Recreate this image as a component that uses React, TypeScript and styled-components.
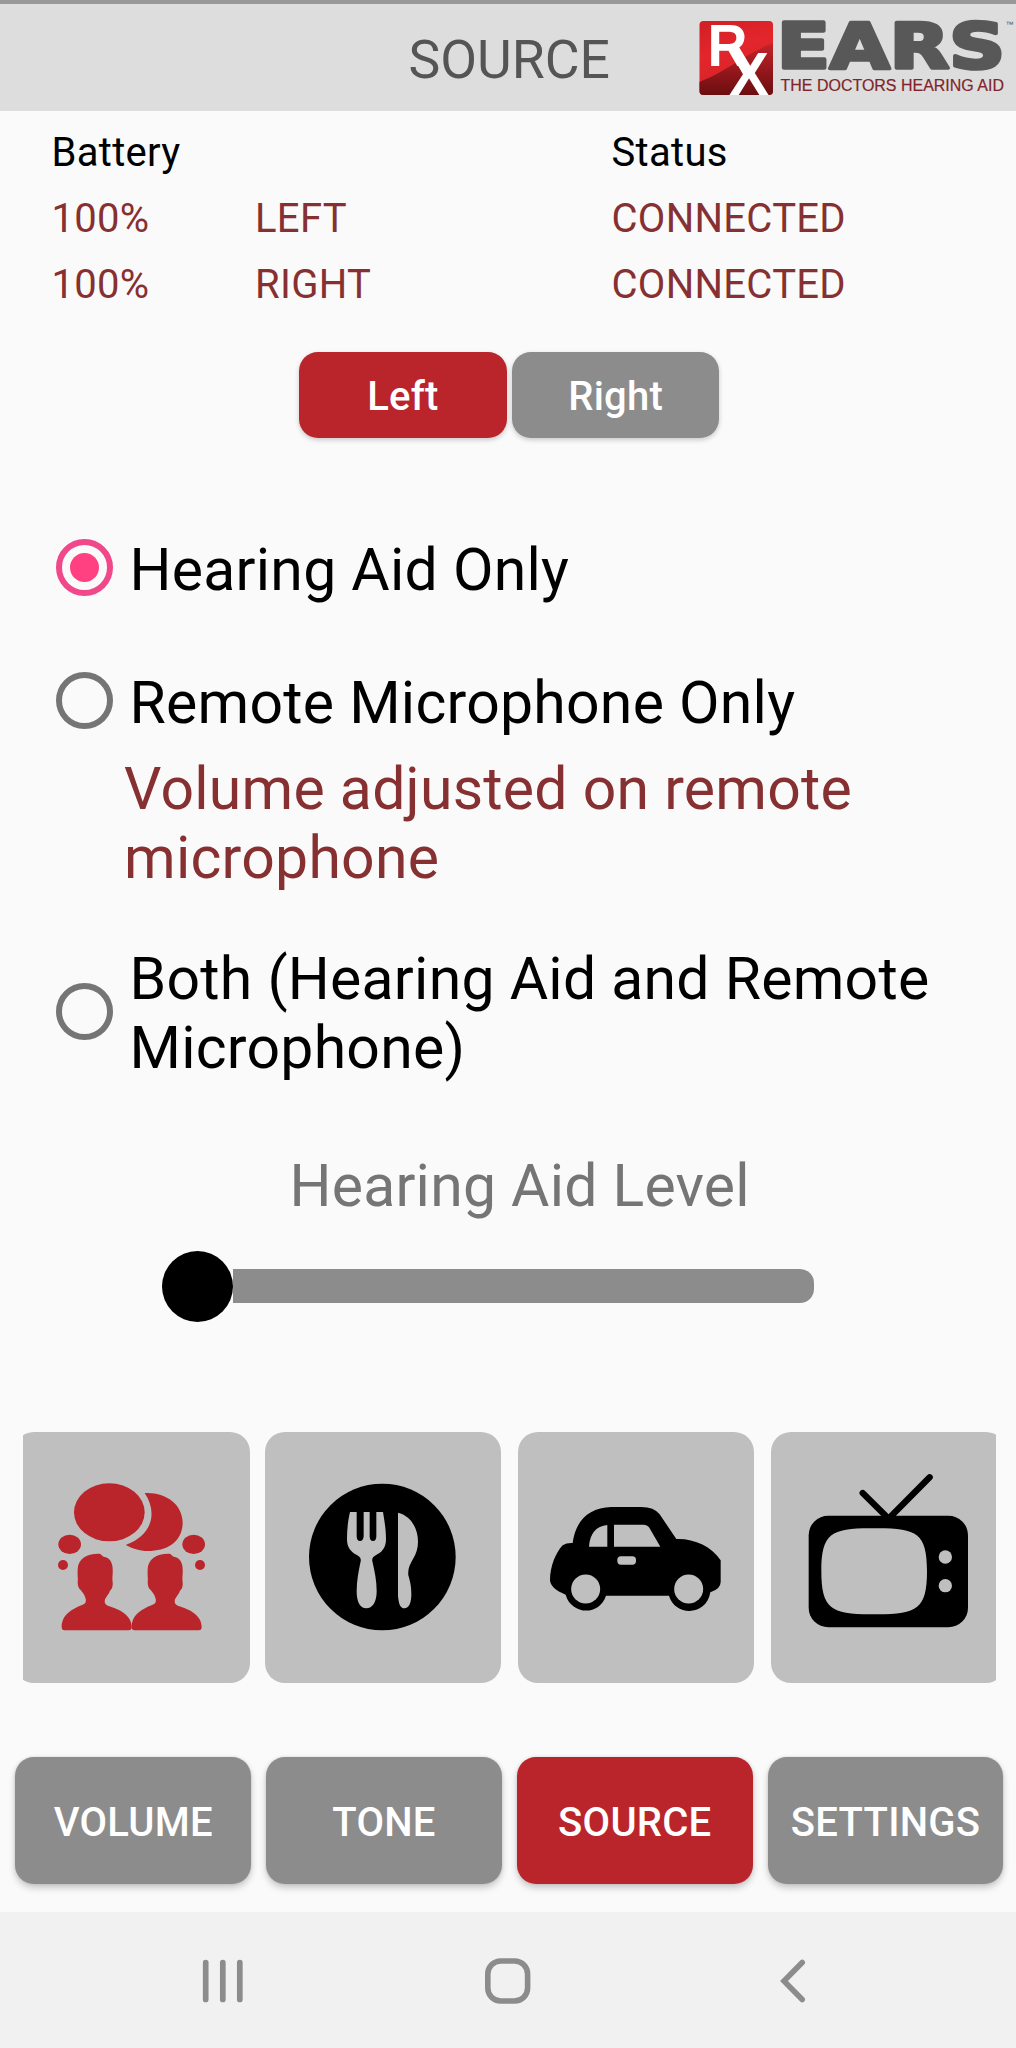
import React, { useState } from "react";
import styled, { createGlobalStyle, css } from "styled-components";

const RED = "#ba252b";
const GREY = "#8c8c8c";
const MAROON = "#863031";

const GlobalStyle = createGlobalStyle`
  * { box-sizing: border-box; }
  body { margin: 0; background: #fafafa; }
`;

const Screen = styled.div`
  width: 1016px;
  height: 2048px;
  display: flex;
  flex-direction: column;
  overflow: hidden;
  background: #fafafa;
  color: #000;
  font-family: Roboto, "Liberation Sans", sans-serif;
`;

const Header = styled.header`
  height: 111px;
  flex: none;
  display: flex;
  justify-content: space-between;
  background: #ddd;
  border-top: 4px solid #989898;
`;

const Title = styled.h1`
  margin: 0 0 0 408.5px;
  font-size: 53.5px;
  font-weight: 400;
  line-height: 63px;
  padding-top: 24px;
  color: #555;
`;

const LogoSvg = styled.svg`
  display: block;
  width: 336px;
  height: 107px;
`;

const StatusGrid = styled.section`
  display: grid;
  grid-template-columns: 203.5px 356.5px 1fr;
  grid-auto-rows: 66px;
  align-items: center;
  padding: 8px 0 0 51.5px;
  height: 240px;
  flex: none;
  font-size: 40px;
  line-height: 47px;
  letter-spacing: 0.3px;
`;

const Cell = styled.span<{ $start?: number; $value?: boolean }>`
  ${(p) => p.$start && css`grid-column: ${p.$start};`}
  color: ${(p) => (p.$value ? MAROON : "#000")};
`;

const Button = styled.button<{ $active: boolean }>`
  border: 0;
  padding: 0;
  border-radius: 19px;
  background: ${(p) => (p.$active ? RED : GREY)};
  color: #fff;
  font: 500 40px/47px Roboto, "Liberation Sans", sans-serif;
  letter-spacing: 0.25px;
  box-shadow: 0 4px 7px rgba(0, 0, 0, 0.2), 0 0 3px rgba(0, 0, 0, 0.12);
`;

const SideToggle = styled.div`
  display: flex;
  justify-content: center;
  gap: 5px;
  height: 87px;
  flex: none;
  padding-left: 2.6px;
`;

const SideButton = styled(Button)`
  width: 207.7px;
  height: 86px;
  margin-top: 0.5px;
  padding-top: 3px;
  box-shadow: 0 2px 5px rgba(0, 0, 0, 0.2);
`;

const Options = styled.section`
  display: flex;
  flex-direction: column;
  height: 706px;
  flex: none;
  padding: 93.5px 0 0 56px;
  font-size: 58.9px;
  letter-spacing: 0.26px;
  line-height: 69px;
`;

const Option = styled.label<{ $gap?: number }>`
  display: flex;
  align-items: center;
  gap: 16.5px;
  margin-top: ${(p) => p.$gap ?? 0}px;
`;

const Radio = styled.span<{ $on: boolean }>`
  width: 57px;
  height: 57px;
  flex: none;
  border: 6px solid ${(p) => (p.$on ? "#f0488a" : "#757575")};
  border-radius: 50%;
  display: grid;
  place-items: center;
  &::after {
    content: "";
    width: 29px;
    height: 29px;
    border-radius: 50%;
    background: ${(p) => (p.$on ? "#ff4081" : "transparent")};
  }
`;

const OptionText = styled.span`
  width: 850px;
  padding-top: 3px;
`;

const Note = styled.p`
  margin: 17px 0 0 68px;
  width: 780px;
  color: ${MAROON};
`;

const Level = styled.section`
  height: 288px;
  flex: none;
  display: flex;
  flex-direction: column;
`;

const LevelTitle = styled.div`
  margin: 7px 0 0 289.5px;
  font-size: 58.9px;
  letter-spacing: 0.22px;
  line-height: 69px;
  color: #757575;
`;

const Slider = styled.div`
  display: flex;
  align-items: center;
  margin: 31px 0 0 162px;
`;

const Thumb = styled.div`
  width: 71px;
  height: 71px;
  border-radius: 50%;
  background: #000;
`;

const Track = styled.div`
  width: 581px;
  height: 34px;
  margin-top: -1px;
  border-radius: 0 14px 14px 0;
  background: ${GREY};
`;

const Modes = styled.section`
  display: flex;
  gap: 17px;
  flex: none;
  width: 973px;
  height: 251px;
  margin-left: 23px;
  overflow: hidden;
`;

const ModeCard = styled.div<{ $first?: boolean }>`
  width: ${(p) => (p.$first ? 236 : 235.7)}px;
  height: 251px;
  flex: none;
  border-radius: 20px;
  background: #bfbfbf;
  margin-left: ${(p) => (p.$first ? "-9px" : 0)};
  margin-right: ${(p) => (p.$first ? "-1.7px" : 0)};
  svg { display: block; width: 236px; height: 251px; }
`;

const Tabs = styled.nav`
  display: flex;
  gap: 15px;
  flex: none;
  height: 229px;
  padding: 73.5px 0 0 15.3px;
`;

const Tab = styled(Button)`
  width: 235.8px;
  height: 127.5px;
  padding-top: 4px;
`;

const SystemBar = styled.footer`
  flex: 1;
  display: flex;
  align-items: center;
  background: #f1f1f1;
  padding: 2px 0 0 199px;
  gap: 234px;
  svg { width: 50px; height: 50px; flex: none; }
`;

const Logo = () => (
  <LogoSvg viewBox="680 4 336 107">
    <defs>
      <linearGradient id="tile" x1="0" y1="0" x2="0.3" y2="1">
        <stop offset="0" stopColor="#cf1f25" />
        <stop offset="0.45" stopColor="#e3262b" />
        <stop offset="1" stopColor="#d3232a" />
      </linearGradient>
      <linearGradient id="shade" x1="0" y1="0" x2="0" y2="1">
        <stop offset="0" stopColor="#c4232a" />
        <stop offset="1" stopColor="#690d10" />
      </linearGradient>
      <clipPath id="tileClip"><rect x="699.5" y="21" width="73.5" height="74" rx="4" /></clipPath>
    </defs>
    <g clipPath="url(#tileClip)">
      <rect x="699" y="20" width="75" height="76" fill="url(#tile)" />
      <path d="M699 82C728 71 747 52 774 43V96H699Z" fill="url(#shade)" />
      <g fill="#fff" fontFamily="Liberation Sans, sans-serif" fontWeight="700">
        <text x="707.5" y="66" fontSize="59" textLength="40" lengthAdjust="spacingAndGlyphs">R</text>
        <text x="729" y="95" fontSize="61" textLength="40" lengthAdjust="spacingAndGlyphs">X</text>
      </g>
      <path d="M729 50L739 47L754 72L744 76Z" fill="#fff" />
    </g>
    <text
      x="777" y="68.3" textLength="228" lengthAdjust="spacingAndGlyphs"
      fill="#585858" stroke="#585858" strokeWidth="3.6" strokeLinejoin="round"
      fontFamily="DejaVu Sans, sans-serif" fontWeight="700" fontSize="61.5"
    >EARS</text>
    <text x="1005.5" y="27" fontSize="8" fill="#555" fontFamily="Liberation Sans, sans-serif">™</text>
    <text x="780.5" y="90.7" fontSize="16.8" textLength="223.5" lengthAdjust="spacingAndGlyphs" fill="#80242a" stroke="#80242a" strokeWidth="0.2" fontFamily="Liberation Sans, sans-serif">THE DOCTORS HEARING AID</text>
  </LogoSvg>
);

/* Icon artwork is laid out on a 3x grid of the 236 x 251 card. */
const Bust = ({ x }: { x: number }) => (
  <path
    transform={`translate(${x} 0)`}
    d="M185 622C185 584 216 567 246 555C256 551 259 547 257 536C253 522 246 515 242 510C235 505 233 495 233 486C235 478 232 470 233 448C234 417 260 400 298 401C305 402 306 408 311 410C329 412 338 428 338 448C339 465 336 473 338 486C339 500 336 507 330 512C327 522 318 530 315 538C313 548 314 554 326 558C360 569 395 585 395 622Q395 631 386 631H194Q185 631 185 622Z"
  />
);

const TalkIcon = () => (
  <svg viewBox="42 36 708 753" fill={RED}>
    <ellipse cx="328" cy="277" rx="106" ry="87" />
    <path d="M434 219C500 216 548 255 548 308C547 367 501 393 443 393C418 393 398 386 377 375C460 344 472 275 434 219Z" />
    <ellipse cx="209" cy="373" rx="34" ry="29" />
    <ellipse cx="581" cy="373" rx="34" ry="29" />
    <circle cx="189" cy="435" r="15" />
    <circle cx="600" cy="435" r="15" />
    <Bust x={0} />
    <Bust x={210} />
  </svg>
);

const DiningIcon = () => (
  <svg viewBox="30 36 708 753">
    <circle cx="382" cy="411" r="220" />
    <g fill="#bfbfbf">
      <path d="M285 276H305V349Q305 363 315 363T326 349V276H344V349Q344 363 354 363T364 349V276H384C390 312 393 334 393 358C393 384 380 398 360 407C352 411 351 417 352 424C359 454 365 482 365 514C365 547 352 565 334 565S305 547 305 514C305 481 311 453 317 424C319 416 314 410 307 406C287 396 276 382 276 358C276 331 278 306 285 276Z" />
      <path d="M429 278C465 286 489 322 489 365C489 385 484 400 474 417C465 433 458 446 460 466C467 490 469 503 469 523C469 549 462 565 448 565C436 565 431 552 429 528Z" />
    </g>
  </svg>
);

const CarIcon = () => (
  <svg viewBox="38 36 708 753">
    <path d="M202 369C210 303 251 262 318 261H408Q446 261 463 283L513 357C565 355 618 378 646 421V486Q646 507 615 517C603 590 508 589 491 527H302C282 589 198 585 181 524Q135 506 134 480C134 440 151 398 172 376Q184 368 202 369Z" />
    <g fill="#bfbfbf">
      <path d="M251 380C254 339 272 319 306 315V380Z" />
      <path d="M326 314H414Q426 314 432 323L465 380H326Z" />
      <rect x="336" y="409" width="56" height="25" rx="11" />
      <circle cx="241" cy="507" r="43.5" />
      <circle cx="550" cy="507" r="43.5" />
    </g>
  </svg>
);

const TvIcon = () => (
  <svg viewBox="44 36 708 753">
    <path d="M319 219L394 293M520 172L404 289" stroke="#000" strokeWidth="19" strokeLinecap="round" />
    <rect x="157" y="287" width="478" height="335" rx="59" />
    <g fill="#bfbfbf">
      <path d="M353 325C480 324 512 337 512 454C512 569 481 584 353 583C226 584 195 569 195 454C195 337 227 324 353 325Z" />
      <circle cx="567" cy="411" r="20" />
      <circle cx="567" cy="497" r="20" />
    </g>
  </svg>
);

const SOURCES = [
  { label: "Hearing Aid Only", gap: 0 },
  { label: "Remote Microphone Only", gap: 61, note: "Volume adjusted on remote microphone" },
  { label: "Both (Hearing Aid and Remote Microphone)", gap: 49 },
];
const MODES = [TalkIcon, DiningIcon, CarIcon, TvIcon];
const TABS = ["VOLUME", "TONE", "SOURCE", "SETTINGS"];

export default function App() {
  const [side, setSide] = useState("Left");
  const [source, setSource] = useState(0);
  const [tab, setTab] = useState("SOURCE");

  return (
    <Screen>
      <GlobalStyle />
      <Header>
        <Title>SOURCE</Title>
        <Logo />
      </Header>
      <StatusGrid>
        <Cell>Battery</Cell>
        <Cell $start={3}>Status</Cell>
        {["LEFT", "RIGHT"].map((ear) => (
          <React.Fragment key={ear}>
            <Cell $value>100%</Cell>
            <Cell $value>{ear}</Cell>
            <Cell $value>CONNECTED</Cell>
          </React.Fragment>
        ))}
      </StatusGrid>
      <SideToggle>
        {["Left", "Right"].map((s) => (
          <SideButton key={s} $active={side === s} onClick={() => setSide(s)}>{s}</SideButton>
        ))}
      </SideToggle>
      <Options>
        {SOURCES.map((o, i) => (
          <React.Fragment key={o.label}>
            <Option $gap={o.gap} onClick={() => setSource(i)}>
              <Radio $on={source === i} />
              <OptionText>{o.label}</OptionText>
            </Option>
            {o.note && <Note>{o.note}</Note>}
          </React.Fragment>
        ))}
      </Options>
      <Level>
        <LevelTitle>Hearing Aid Level</LevelTitle>
        <Slider>
          <Thumb />
          <Track />
        </Slider>
      </Level>
      <Modes>
        {MODES.map((Icon, i) => (
          <ModeCard key={i} $first={i === 0}><Icon /></ModeCard>
        ))}
      </Modes>
      <Tabs>
        {TABS.map((t) => (
          <Tab key={t} $active={tab === t} onClick={() => setTab(t)}>{t}</Tab>
        ))}
      </Tabs>
      <SystemBar>
        <svg viewBox="0 0 50 50" stroke={GREY} strokeWidth="5.7" strokeLinecap="round">
          <path d="M6.7 6.5V43.5M23.8 6.5V43.5M40.8 6.5V43.5" />
        </svg>
        <svg viewBox="0 0 50 50" fill="none" stroke={GREY} strokeWidth="5.6">
          <rect x="4.8" y="5" width="39.8" height="40" rx="13" />
        </svg>
        <svg viewBox="0 0 50 50" fill="none" stroke={GREY} strokeWidth="5.6" strokeLinecap="round">
          <path d="M35.2 6.5L17 25L35.2 43.5" />
        </svg>
      </SystemBar>
    </Screen>
  );
}
